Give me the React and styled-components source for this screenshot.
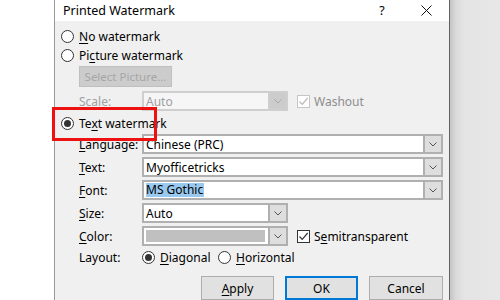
import React from 'react';
import styled, { createGlobalStyle } from 'styled-components';

const Global = createGlobalStyle`
  html, body { margin: 0; padding: 0; background: #fff; }
  body {
    width: 500px;
    height: 300px;
    overflow: hidden;
    font-family: "Noto Sans", "Liberation Sans", sans-serif;
    font-size: 12px;
    color: #000;
  }
`;

const Page = styled.div`
  display: flex;
  width: 500px;
  height: 300px;
  padding-left: 54px;
  box-sizing: border-box;
`;

const Dialog = styled.div`
  position: relative;
  width: 396px;
  height: 300px;
  box-sizing: border-box;
  border-left: 1px solid #9a9a9a;
  border-right: 1px solid #626262;
  background: #f0f0f0;
  display: flex;
  flex-direction: column;
`;

const Shadow = styled.div`
  flex: 1;
  background: linear-gradient(90deg, #c4c4c4 0px, #dadada 6px, #e4e4e4 14px, #e7e7e7 100%);
`;

const TitleBar = styled.div`
  height: 23px;
  background: #fff;
  display: flex;
  align-items: center;
  padding-left: 8px;
  padding-right: 17px;
  font-size: 12.5px;
`;

const Title = styled.div`
  flex: 1;
`;

const Help = styled.div`
  width: 12px;
  text-align: center;
  margin-right: 33px;
`;

const Body = styled.div`
  display: flex;
  flex-direction: column;
  padding: 6px 5px 0 6px;
`;

const RadioRow = styled.label`
  display: flex;
  align-items: center;
  height: ${p => p.$h || 19}px;
  margin-top: ${p => p.$mt || 0}px;
  gap: 5px;
  white-space: nowrap;
`;

const RadioDot = styled.span`
  width: 11px;
  height: 11px;
  border: 1px solid #333;
  border-radius: 50%;
  background: #fff;
  display: flex;
  align-items: center;
  justify-content: center;
  flex-shrink: 0;
  &::after {
    content: '';
    width: 7px;
    height: 7px;
    border-radius: 50%;
    background: ${p => (p.$on ? '#333' : 'transparent')};
  }
`;

const U = styled.span`
  text-decoration: underline;
  text-underline-offset: 2px;
`;

const Indent = styled.div`
  display: flex;
  align-items: center;
  margin-left: 18px;
  margin-top: ${p => p.$mt || 0}px;
  height: ${p => p.$h || 20}px;
`;

const DisabledButton = styled.div`
  width: 93px;
  height: 21px;
  box-sizing: border-box;
  background: #cccccc;
  border: 1px solid #bfbfbf;
  color: #a6a6a6;
  display: flex;
  align-items: center;
  justify-content: center;
  white-space: nowrap;
  font-size: 11.5px;
`;

const Label = styled.div`
  width: 63px;
  flex-shrink: 0;
  white-space: nowrap;
  color: ${p => (p.$disabled ? '#a0a0a0' : '#000')};
`;

const Combo = styled.div`
  width: ${p => p.$w || 301}px;
  height: 20px;
  box-sizing: border-box;
  display: flex;
  border: 2px solid ${p => (p.$disabled ? '#cfcfcf' : '#b0b0b0')};
  background: ${p => (p.$disabled ? '#f6f6f6' : '#fff')};
  color: ${p => (p.$disabled ? '#a0a0a0' : '#000')};
`;

const ComboText = styled.div`
  flex: 1;
  display: flex;
  align-items: center;
  padding-left: 2px;
  overflow: hidden;
  white-space: nowrap;
`;

const Selected = styled.span`
  background: #99c9ef;
  padding: 0 1px 0 0;
  line-height: 14px;
`;

const Swatch = styled.div`
  flex: 1;
  margin: 2px 3px 2px 2px;
  background: #c0c0c0;
`;

const DropBtn = styled.div`
  width: 16px;
  flex-shrink: 0;
  border-left: 2px solid ${p => (p.$disabled ? '#cfcfcf' : '#b0b0b0')};
  background: ${p => (p.$disabled ? '#cccccc' : '#dedede')};
  display: flex;
  align-items: center;
  justify-content: center;
`;

const Check = styled.div`
  display: flex;
  align-items: center;
  gap: 4px;
  margin-left: 9px;
  white-space: nowrap;
  color: ${p => (p.$disabled ? '#8d8d8d' : '#000')};
`;

const CheckBox = styled.span`
  width: 11px;
  height: 11px;
  border: 1px solid ${p => (p.$disabled ? '#c6c6c6' : '#333')};
  background: #fff;
  display: flex;
  align-items: center;
  justify-content: center;
`;

const LayoutRow = styled.div`
  display: flex;
  align-items: center;
  margin-left: 18px;
  margin-top: 2px;
  height: 18px;
`;

const LayoutOptions = styled.div`
  display: flex;
`;

const LayoutOption = styled(RadioRow)`
  width: ${p => p.$w}px;
`;

const Buttons = styled.div`
  display: flex;
  justify-content: flex-end;
  gap: 11px;
  margin-top: 10px;
  padding-right: 1px;
`;

const Button = styled.div`
  width: ${p => p.$w || 73}px;
  height: 24px;
  box-sizing: border-box;
  background: #e1e1e1;
  border: ${p => (p.$primary ? '2px solid #0078d7' : '1px solid #adadad')};
  display: flex;
  align-items: center;
  justify-content: center;
`;

const Highlight = styled.div`
  position: absolute;
  left: -3px;
  top: 107px;
  width: 105px;
  height: 34px;
  box-sizing: border-box;
  border: 3px solid #ee1111;
  pointer-events: none;
`;

const Chevron = ({ color = '#555' }) => (
  <svg width="8" height="5" viewBox="0 0 8 5">
    <path d="M0.5 0.5 L4 4 L7.5 0.5" fill="none" stroke={color} strokeWidth="1" />
  </svg>
);

const Tick = ({ color = '#333' }) => (
  <svg width="11" height="11" viewBox="0 0 11 11">
    <path d="M1.5 5.5 L4.2 8.3 L9.7 2" fill="none" stroke={color} strokeWidth="1.2" />
  </svg>
);

const Close = () => (
  <svg width="11" height="11" viewBox="0 0 11 11">
    <path d="M0.5 0.5 L10.5 10.5 M10.5 0.5 L0.5 10.5" stroke="#111" strokeWidth="1" />
  </svg>
);

const Field = ({ label, children }) => (
  <Indent $mt={3}>
    <Label>{label}</Label>
    {children}
  </Indent>
);

export default function App() {
  return (
    <>
      <Global />
      <Page>
        <Dialog>
          <TitleBar>
            <Title>Printed Watermark</Title>
            <Help>?</Help>
            <Close />
          </TitleBar>
          <Body>
            <RadioRow>
              <RadioDot />
              <span><U>N</U>o watermark</span>
            </RadioRow>
            <RadioRow>
              <RadioDot />
              <span>Pi<U>c</U>ture watermark</span>
            </RadioRow>
            <Indent $mt={1} $h={21}>
              <DisabledButton>Select Picture...</DisabledButton>
            </Indent>
            <Indent $mt={4}>
              <Label $disabled>Scale:</Label>
              <Combo $w={146} $disabled>
                <ComboText>Auto</ComboText>
                <DropBtn $disabled><Chevron color="#a8a8a8" /></DropBtn>
              </Combo>
              <Check $disabled>
                <CheckBox $disabled><Tick color="#b8b8b8" /></CheckBox>
                Washout
              </Check>
            </Indent>
            <RadioRow $mt={3} $h={18}>
              <RadioDot $on />
              <span>Te<U>x</U>t watermark</span>
            </RadioRow>
            <Indent $mt={2}>
              <Label><U>L</U>anguage:</Label>
              <Combo>
                <ComboText>Chinese (PRC)</ComboText>
                <DropBtn><Chevron /></DropBtn>
              </Combo>
            </Indent>
            <Field label={<><U>T</U>ext:</>}>
              <Combo>
                <ComboText>Myofficetricks</ComboText>
                <DropBtn><Chevron /></DropBtn>
              </Combo>
            </Field>
            <Field label={<><U>F</U>ont:</>}>
              <Combo>
                <ComboText><Selected>MS Gothic</Selected></ComboText>
                <DropBtn><Chevron /></DropBtn>
              </Combo>
            </Field>
            <Field label={<><U>S</U>ize:</>}>
              <Combo $w={146}>
                <ComboText>Auto</ComboText>
                <DropBtn><Chevron /></DropBtn>
              </Combo>
            </Field>
            <Field label={<><U>C</U>olor:</>}>
              <Combo $w={146}>
                <Swatch />
                <DropBtn><Chevron /></DropBtn>
              </Combo>
              <Check>
                <CheckBox><Tick /></CheckBox>
                <span>S<U>e</U>mitransparent</span>
              </Check>
            </Field>
            <LayoutRow>
              <Label>Layout:</Label>
              <LayoutOptions>
                <LayoutOption $w={76} $h={18}>
                  <RadioDot $on />
                  <span><U>D</U>iagonal</span>
                </LayoutOption>
                <LayoutOption $w={90} $h={18}>
                  <RadioDot />
                  <span><U>H</U>orizontal</span>
                </LayoutOption>
              </LayoutOptions>
            </LayoutRow>
            <Buttons>
              <Button><span><U>A</U>pply</span></Button>
              <Button $primary>OK</Button>
              <Button $w={74}>Cancel</Button>
            </Buttons>
          </Body>
          <Highlight />
        </Dialog>
        <Shadow />
      </Page>
    </>
  );
}
